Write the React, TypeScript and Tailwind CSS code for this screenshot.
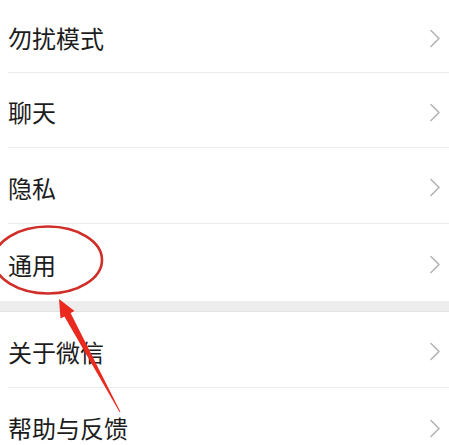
import React from 'react';

const groups = [
  [
    { label: '勿扰模式', h: 'h-[73px]' },
    { label: '聊天', h: 'h-[75px]' },
    { label: '隐私', h: 'h-[76px]' },
    { label: '通用', h: 'h-[77px]' },
  ],
  [
    { label: '关于微信', h: 'h-[76px]' },
    { label: '帮助与反馈', h: 'h-[76px]' },
  ],
];

const Chevron = () => (
  <svg width="12" height="19" viewBox="0 0 12 19" fill="none" className="shrink-0">
    <path d="M2 1.5 L10 9.5 L2 17.5" stroke="#b4b4b4" strokeWidth="1.6" strokeLinejoin="round" strokeLinecap="round" />
  </svg>
);

const Row = ({ label, h, last }: { label: string; h: string; last: boolean }) => (
  <div className={`${h} flex items-stretch pl-2`}>
    <div className={`flex flex-1 items-center justify-between pr-[8px] pt-[4px] ${last ? '' : 'border-b border-[#ececec]'}`}>
      <span className="text-[24px] leading-none text-[#1c1c1c]">{label}</span>
      <Chevron />
    </div>
  </div>
);

export default function App() {
  return (
    <div
      className="relative w-[449px] h-[445px] overflow-hidden bg-white"
      style={{ fontFamily: '"Noto Sans CJK SC", "Noto Sans", sans-serif' }}
    >
      {groups.map((group, gi) => (
        <div key={gi}>
          {gi > 0 && <div className="h-[11px] bg-[#ededed] border-b border-[#e2e2e2]" />}
          {group.map((item, i) => (
            <Row key={item.label} label={item.label} h={item.h} last={i === group.length - 1} />
          ))}
        </div>
      ))}

      {/* red annotation */}
      <svg className="absolute inset-0 pointer-events-none" width="449" height="445" viewBox="0 0 449 445">
        <ellipse cx="48" cy="260" rx="54" ry="33.5" fill="none" stroke="#cf2f28" strokeWidth="2.6" />
        <polygon
          points="59,299 74.5,311 70.6,313.1 120.5,412 119.5,412 64.4,316.5 60.5,318.6"
          fill="#ea2a1e"
        />
      </svg>
    </div>
  );
}
